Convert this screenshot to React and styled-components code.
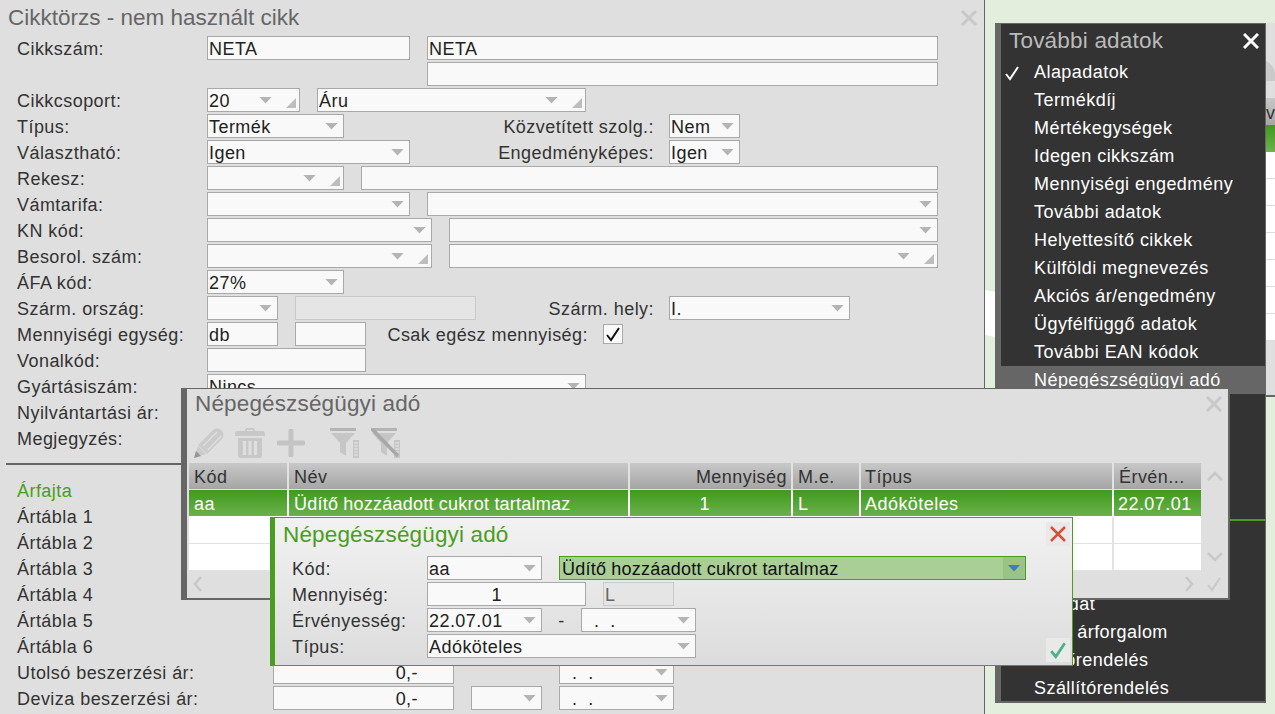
import React from 'react';
import styled, { createGlobalStyle } from 'styled-components';

const GlobalStyle = createGlobalStyle`
html, body { margin: 0; padding: 0; overflow: hidden; }
body { font-family: "Liberation Sans", Arial, sans-serif; font-size: 18px; letter-spacing: 0.45px; color: #333; }
* { box-sizing: border-box; }
`;

const Page = styled.div`
position: relative;
width: 1275px;
height: 714px;
overflow: hidden;
background: #e3eedd;
`;

const Main = styled.div`
width: 985px;
height: 714px;
background: #dfdfdf;
border-right: 1px solid #666;
overflow: hidden;
`;

const TitleBar = styled.div`
display: flex;
align-items: center;
justify-content: space-between;
height: ${p => p.$h || 36}px;
padding: ${p => p.$pad || '0 7px 0 8px'};
font-size: 22.5px;
letter-spacing: ${p => p.$ls || 0}px;
color: ${p => p.$color || '#666'};
`;

const Row = styled.div`
display: flex;
align-items: flex-start;
height: 26px;
padding-left: ${p => p.$pl || 17}px;
`;

const Label = styled.div`
flex: none;
width: ${p => p.$w || 190}px;
height: 24px;
line-height: 26px;
white-space: nowrap;
color: ${p => p.$color || '#333'};
`;

const SideLabel = styled(Label)`
text-align: right;
margin-right: 15px;
`;

const FieldBox = styled.div`
flex: none;
display: flex;
align-items: center;
width: ${p => p.$w}px;
height: 24px;
margin-left: ${p => p.$ml || 0}px;
padding: 0 5px 0 1px;
background: ${p => (p.$off ? '#e5e5e5' : '#f9f9f9')};
border: 1px solid ${p => (p.$off ? '#cacaca' : '#a9a9a9')};
color: ${p => (p.$off ? '#666' : '#222')};
`;

const FieldText = styled.div`
flex: 1;
min-width: 0;
height: 22px;
line-height: 24px;
white-space: pre;
text-align: ${p => (p.$pr ? 'right' : 'left')};
padding-right: ${p => p.$pr || 0}px;
`;

const Arrow = styled.span`
flex: none;
width: 13px;
height: 7px;
background: ${p => p.$color || '#b4b4b4'};
clip-path: polygon(0 0, 100% 0, 50% 100%);
`;

const Corner = styled.span`
flex: none;
align-self: flex-end;
width: 10px;
height: 10px;
margin: 0 -2px 3px 14px;
background: #bdbdbd;
clip-path: polygon(100% 0, 100% 100%, 0 100%);
`;

const CheckBox = styled.div`
width: 20px;
height: 20px;
margin-top: 2px;
background: #f9f9f9;
border: 1px solid #a9a9a9;
display: flex;
align-items: center;
justify-content: center;
`;

const Rule = styled.div`
height: 2px;
margin: 11px 6px 13px 6px;
background: #666;
`;

const Field = ({ w, ml, arrow, corner, pr, off, children }) => (
    <FieldBox $w={w} $ml={ml} $off={off}>
        <FieldText $pr={pr}>{children}</FieldText>
        {arrow && <Arrow />}
        {corner && <Corner />}
    </FieldBox>
);

const Svg = styled.svg`
flex: none;
display: block;
`;

const CloseIcon = ({ color = '#c8c8c8', size = 16, width = 3 }) => (
    <Svg width={size} height={size} viewBox="0 0 16 16">
        <path d="M1 1L15 15M15 1L1 15" stroke={color} strokeWidth={width} fill="none" />
    </Svg>
);

const CheckIcon = ({ color = '#c8c8c8', size = 16, width = 2 }) => (
    <Svg width={size} height={size} viewBox="0 0 16 16">
        <path d="M2 9L6 14L14 2" stroke={color} strokeWidth={width} fill="none" />
    </Svg>
);

const Chevron = ({ d, w = 16, h = 10 }) => (
    <Svg width={w} height={h} viewBox={`0 0 ${w} ${h}`}>
        <path d={d} stroke="#c8c8c8" strokeWidth="2.5" fill="none" />
    </Svg>
);

const Window = styled.div`
position: absolute;
left: ${p => p.$x}px;
top: ${p => p.$y}px;
width: ${p => p.$w}px;
height: ${p => p.$h}px;
`;

/* the window behind the menu, only a strip of it shows on the right */
const BackWindow = styled(Window)`
background: #dfdfdf;
border-bottom: 2px solid #666;
overflow: hidden;
display: flex;
flex-direction: column;
`;

const BackBlob = styled.div`
height: 75px;
padding-top: 38px;
`;

const BackHead = styled.div`
height: 27px;
line-height: 31px;
background: linear-gradient(#c8c8c8, #a6a6a6);
white-space: nowrap;
`;

const BackGreen = styled.div`
height: 27px;
background: linear-gradient(#3f9a1c, #6cb24e);
`;

const BackLine = styled.div`
height: 27px;
background: #fff;
border-bottom: 1px solid #ddd;
`;

const BackFoot = styled.div`
flex: 1;
background: #dfdfdf;
`;

const WhitePatch = styled(Window)`
background: #fff;
clip-path: polygon(0 0, 100% 4%, 100% 100%, 0 96%);
`;

const Menu = styled(Window)`
background: #333;
border: 1px solid #666;
border-width: 1px 1px 2px 6px;
color: #fff;
`;

const MenuTitle = styled(TitleBar)`
height: 34px;
padding: 0 6px 0 8px;
color: #bbb;
`;

const MenuItem = styled.div`
display: flex;
align-items: center;
height: 28px;
padding-top: 1px;
background: ${p => (p.$active ? '#666' : 'transparent')};
margin-left: ${p => (p.$active ? '-6px' : 0)};
padding-left: ${p => (p.$active ? '9px' : '3px')};
`;

const MenuMark = styled.div`
width: 30px;
`;

const MenuRule = styled.div`
height: 2px;
margin: 125px 0 69px;
background: #4a9e1f;
`;

const Dialog = styled(Window)`
background: #dfdfdf;
border: 1px solid #666;
border-width: 1px 2px 2px 6px;
`;

const Toolbar = styled.div`
display: flex;
align-items: center;
height: 30px;
margin-top: 9px;
padding-left: 7px;
`;

const ToolButton = styled.div`
width: ${p => p.$w}px;
`;

const TableArea = styled.div`
display: flex;
margin: 5px 0 0 2px;
height: 107px;
`;

const Table = styled.div`
width: 1012px;
background: #fff;
`;

const TableRow = styled.div`
display: grid;
grid-template-columns: 100px 341px 163px 68px 253px 87px;
height: ${p => p.$h || 27}px;
background: ${p => p.$bg || '#fff'};
color: ${p => p.$color || '#333'};
`;

const Cell = styled.div`
line-height: 28px;
padding: ${p => p.$pad || '0 0 0 5px'};
text-align: ${p => p.$align || 'left'};
letter-spacing: ${p => p.$ls ?? 0.45}px;
border-right: 2px solid ${p => p.$line || '#e2e2e2'};
border-bottom: 1px solid ${p => p.$line || '#e2e2e2'};
white-space: nowrap;
overflow: hidden;
&:last-child { border-right: none; }
`;

const ScrollColumn = styled.div`
flex: 1;
display: flex;
flex-direction: column;
align-items: center;
justify-content: space-between;
padding: 8px 0 8px;
`;

const TableFoot = styled.div`
display: flex;
align-items: center;
height: 28px;
padding: 0 6px 0 6px;
`;

const FootGap = styled.div`
flex: 1;
`;

const FootIcon = styled.div`
margin-left: ${p => p.$ml || 0}px;
`;

const EditDialog = styled(Window)`
background: linear-gradient(#f2f2f2, #dcdcdc);
border: 1px solid #4a9e1f;
border-left-width: 5px;
`;

const EditBody = styled.div`
position: relative;
height: 100%;
`;

const SquareButton = styled.div`
position: absolute;
right: 2px;
top: ${p => p.$top}px;
width: 24px;
height: 24px;
display: flex;
align-items: center;
justify-content: center;
background: ${p => p.$bg || '#e9e9e9'};
`;

const EditRows = styled.div`
padding-top: 4px;
`;

const GreenBox = styled.div`
display: flex;
width: 467px;
height: 24px;
margin-left: 17px;
background: #a9cf97;
border: 1px solid #4a9e1f;
color: #111;
`;

const GreenText = styled.div`
flex: 1;
padding-left: 2px;
line-height: 24px;
letter-spacing: 0.22px;
white-space: nowrap;
`;

const GreenButton = styled.div`
width: 22px;
display: flex;
align-items: center;
justify-content: center;
background: #98c485;
`;

const Dash = styled.div`
flex: none;
width: 39px;
text-align: center;
line-height: 26px;
`;

const menuTop = ['Alapadatok', 'Termékdíj', 'Mértékegységek', 'Idegen cikkszám', 'Mennyiségi engedmény', 'További adatok', 'Helyettesítő cikkek', 'Külföldi megnevezés', 'Akciós ár/engedmény', 'Ügyfélfüggő adatok', 'További EAN kódok'];
const menuBottom = ['Ár adat', 'Havi árforgalom', 'Vevőrendelés', 'Szállítórendelés'];
const priceTables = ['Ártábla 1', 'Ártábla 2', 'Ártábla 3', 'Ártábla 4', 'Ártábla 5', 'Ártábla 6'];
const DOTS = '  .  .';

const PencilIcon = () => (
    <Svg width="30" height="30" viewBox="0 0 30 30">
        <path d="M4 17L19 2C22 0 26 0 28 3C30 6 30 8 28 11L13 26Z" fill="#cbcbcb" />
        <path d="M9 18L23 4M14 22L27 8" stroke="#dfdfdf" strokeWidth="1.2" />
        <path d="M4 18L12 26L0 30Z" fill="#cbcbcb" />
        <path d="M2 23L7 28L0 30Z" fill="#969696" />
    </Svg>
);

const TrashIcon = () => (
    <Svg width="30" height="30" viewBox="0 0 30 30">
        <path d="M10 3C10 1 11 0 12 0H18C19 0 20 1 20 3H28C29 3 30 4 30 6V8H0V6C0 4 1 3 2 3ZM12 3H18V2H12Z" fill="#c8c8c8" />
        <path d="M3 10H27V27C27 29 26 30 24 30H6C4 30 3 29 3 27ZM8 13V27H11V13ZM13.5 13V27H16.5V13ZM19 13V27H22V13Z" fill="#c8c8c8" fillRule="evenodd" />
    </Svg>
);

const PlusIcon = () => (
    <Svg width="28" height="28" viewBox="0 0 28 28">
        <path d="M14 2V26M2 14H26" stroke="#c4c4c4" strokeWidth="5" strokeLinecap="round" />
    </Svg>
);

const FilterIcon = ({ crossed }) => (
    <Svg width="30" height="30" viewBox="0 0 30 30">
        <path d="M0 0H26V3H0Z" fill="#b4b4b4" />
        <path d="M1 5H25L16 15V28L10 24V15Z" fill="#c6c6c6" />
        <path d="M23 12H29V30H23Z" fill="#c6c6c6" />
        <path d="M24 15H28M24 18H28M24 21H28M24 24H28M24 27H28" stroke="#e8e8e8" strokeWidth="1" />
        {crossed && <path d="M1 1L27 28" stroke="#a8a8a8" strokeWidth="3.5" />}
    </Svg>
);

const App = () => (
    <Page>
        <GlobalStyle />
        <Main>
            <TitleBar>
                Cikktörzs - nem használt cikk
                <CloseIcon />
            </TitleBar>
            <Row><Label>Cikkszám:</Label><Field w={203}>NETA</Field><Field w={511} ml={17}>NETA</Field></Row>
            <Row><Label /><Field w={511} ml={220} /></Row>
            <Row><Label>Cikkcsoport:</Label><Field w={93} arrow corner>20</Field><Field w={269} ml={17} arrow corner>Áru</Field></Row>
            <Row><Label>Típus:</Label><Field w={137} arrow>Termék</Field><SideLabel $w={310}>Közvetített szolg.:</SideLabel><Field w={71} arrow>Nem</Field></Row>
            <Row><Label>Választható:</Label><Field w={203} arrow>Igen</Field><SideLabel $w={244}>Engedményképes:</SideLabel><Field w={71} arrow>Igen</Field></Row>
            <Row><Label>Rekesz:</Label><Field w={137} arrow corner /><Field w={577} ml={17} /></Row>
            <Row><Label>Vámtarifa:</Label><Field w={203} arrow /><Field w={511} ml={17} arrow /></Row>
            <Row><Label>KN kód:</Label><Field w={225} arrow /><Field w={489} ml={17} arrow /></Row>
            <Row><Label>Besorol. szám:</Label><Field w={225} arrow corner /><Field w={489} ml={17} arrow corner /></Row>
            <Row><Label>ÁFA kód:</Label><Field w={137} arrow>27%</Field></Row>
            <Row><Label>Szárm. ország:</Label><Field w={71} arrow /><Field w={181} ml={17} off /><SideLabel $w={178}>Szárm. hely:</SideLabel><Field w={181} arrow>I.</Field></Row>
            <Row>
                <Label>Mennyiségi egység:</Label><Field w={71}>db</Field><Field w={71} ml={17} />
                <SideLabel $w={222}>Csak egész mennyiség:</SideLabel>
                <CheckBox><CheckIcon color="#111" /></CheckBox>
            </Row>
            <Row><Label>Vonalkód:</Label><Field w={159} /></Row>
            <Row><Label>Gyártásiszám:</Label><Field w={379} arrow>Nincs</Field></Row>
            <Row><Label>Nyilvántartási ár:</Label></Row>
            <Row><Label>Megjegyzés:</Label></Row>
            <Rule />
            <Row><Label $color="#4a9e1f">Árfajta</Label></Row>
            {priceTables.map(name => <Row key={name}><Label>{name}</Label></Row>)}
            <Row><Label $w={256}>Utolsó beszerzési ár:</Label><Field w={181} pr={30}>0,-</Field><Field w={115} ml={105} arrow>{DOTS}</Field></Row>
            <Row><Label $w={256}>Deviza beszerzési ár:</Label><Field w={181} pr={30}>0,-</Field><Field w={71} ml={17} arrow /><Field w={115} ml={17} arrow>{DOTS}</Field></Row>
        </Main>

        <WhitePatch $x={985} $y={290} $w={10} $h={47} />

        <BackWindow $x={1266} $y={23} $w={9} $h={374}>
            <BackBlob>
                <Svg width="9" height="30" viewBox="0 0 9 30">
                    <path d="M0 0C4 2 9 6 9 14V20H0Z" fill="#c9c9c9" />
                </Svg>
            </BackBlob>
            <BackHead>ve</BackHead>
            <BackGreen />
            <BackLine /><BackLine /><BackLine /><BackLine /><BackLine /><BackLine /><BackLine />
            <BackFoot />
        </BackWindow>

        <Menu $x={995} $y={23} $w={271} $h={680}>
            <MenuTitle $ls={0.2}>
                További adatok
                <CloseIcon color="#fff" />
            </MenuTitle>
            {menuTop.map((name, i) => (
                <MenuItem key={name}>
                    <MenuMark>{i === 0 && <CheckIcon color="#fff" />}</MenuMark>
                    {name}
                </MenuItem>
            ))}
            <MenuItem $active><MenuMark />Népegészségügyi adó</MenuItem>
            <MenuRule />
            {menuBottom.map(name => <MenuItem key={name}><MenuMark />{name}</MenuItem>)}
        </Menu>

        <Dialog $x={181} $y={388} $w={1049} $h={212}>
            <TitleBar $h={30} $pad="0 6px 0 8px" $ls={0.15}>
                Népegészségügyi adó
                <CloseIcon />
            </TitleBar>
            <Toolbar>
                <ToolButton $w={41}><PencilIcon /></ToolButton>
                <ToolButton $w={42}><TrashIcon /></ToolButton>
                <ToolButton $w={53}><PlusIcon /></ToolButton>
                <ToolButton $w={41}><FilterIcon /></ToolButton>
                <ToolButton $w={30}><FilterIcon crossed /></ToolButton>
            </Toolbar>
            <TableArea>
                <Table>
                    <TableRow $bg="linear-gradient(#c8c8c8, #a4a4a4)">
                        <Cell>Kód</Cell><Cell>Név</Cell><Cell $align="right" $pad="0 4px 0 0">Mennyiség</Cell>
                        <Cell>M.e.</Cell><Cell $pad="0 0 0 4px">Típus</Cell><Cell>Érvén...</Cell>
                    </TableRow>
                    <TableRow $bg="linear-gradient(#3f9a1c, #6cb24e)" $color="#fff">
                        <Cell $line="#fff">aa</Cell><Cell $line="#fff" $ls={0.22}>Üdítő hozzáadott cukrot tartalmaz</Cell>
                        <Cell $line="#fff" $align="right" $pad="0 81px 0 0">1</Cell><Cell $line="#fff">L</Cell>
                        <Cell $line="#fff" $pad="0 0 0 4px">Adóköteles</Cell><Cell $line="#fff" $pad="0 0 0 4px">22.07.01</Cell>
                    </TableRow>
                    <TableRow><Cell /><Cell /><Cell /><Cell /><Cell /><Cell /></TableRow>
                    <TableRow><Cell /><Cell /><Cell /><Cell /><Cell /><Cell /></TableRow>
                </Table>
                <ScrollColumn>
                    <Chevron d="M1 9L8 2L15 9" />
                    <Chevron d="M1 1L8 8L15 1" />
                </ScrollColumn>
            </TableArea>
            <TableFoot>
                <FootIcon><Chevron d="M8 1L2 8L8 15" w={10} h={16} /></FootIcon>
                <FootGap />
                <FootIcon><Chevron d="M2 1L8 8L2 15" w={10} h={16} /></FootIcon>
                <FootIcon $ml={12}><CheckIcon /></FootIcon>
            </TableFoot>
        </Dialog>

        <EditDialog $x={270} $y={517} $w={803} $h={149}>
            <EditBody>
                <TitleBar $h={34} $color="#4a9e1f" $pad="0 0 0 8px" $ls={0.15}>Népegészségügyi adó</TitleBar>
                <SquareButton $top={4}><CloseIcon color="#d4503a" size={16} width={2.5} /></SquareButton>
                <EditRows>
                    <Row><Label $w={135}>Kód:</Label><Field w={115} arrow>aa</Field>
                        <GreenBox>
                            <GreenText>Üdítő hozzáadott cukrot tartalmaz</GreenText>
                            <GreenButton><Arrow $color="#3f7fb8" /></GreenButton>
                        </GreenBox>
                    </Row>
                    <Row><Label $w={135}>Mennyiség:</Label><Field w={159} pr={78}>1</Field><Field w={71} ml={17} off>L</Field></Row>
                    <Row><Label $w={135}>Érvényesség:</Label><Field w={115} arrow>22.07.01</Field><Dash>-</Dash><Field w={115} arrow>{DOTS}</Field></Row>
                    <Row><Label $w={135}>Típus:</Label><Field w={269} arrow>Adóköteles</Field></Row>
                </EditRows>
                <SquareButton $top={120}><CheckIcon color="#4fb08c" size={18} width={2.5} /></SquareButton>
            </EditBody>
        </EditDialog>
    </Page>
);

export default App;
